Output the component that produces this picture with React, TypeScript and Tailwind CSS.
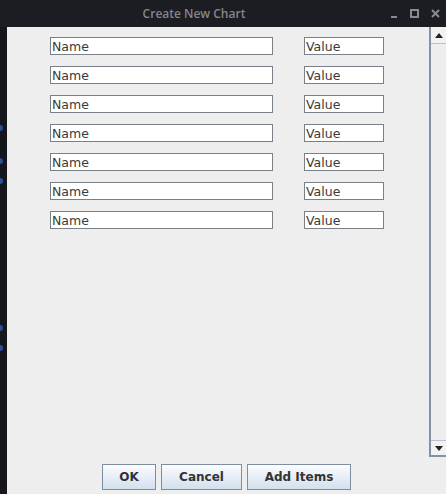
import React from 'react'

const ROWS = 7

function Field({ label, width }: { label: string; width: string }) {
  return (
    <div
      className={`${width} h-[18px] bg-white border border-[#7a8088] flex items-center pl-[1px] pt-[2px] text-[12.5px] leading-none text-[#3a3a3a]`}
      style={{ fontFamily: '"DejaVu Sans", sans-serif' }}
    >
      {label}
    </div>
  )
}

function DialogButton({ label, width }: { label: string; width: string }) {
  return (
    <button
      className={`${width} h-[26px] border border-[#7d8ea3] bg-gradient-to-b from-[#fbfcfe] to-[#d3e0ee] text-[12px] font-bold text-[#333333] flex items-center justify-center`}
      style={{ fontFamily: '"DejaVu Sans", sans-serif' }}
    >
      {label}
    </button>
  )
}

export default function App() {
  return (
    <div className="w-[446px] h-[494px] bg-[#1b1d23] flex flex-col overflow-hidden">
      {/* Title bar */}
      <div className="h-[27px] shrink-0 flex items-center">
        <div
          className="flex-1 text-center text-[12px] font-semibold text-[#85868a] pl-[4px]"
          style={{ fontFamily: '"Open Sans", sans-serif' }}
        >
          Create New Chart
        </div>
        <div className="flex items-center gap-[12px] pr-[6px] w-[62px] justify-end">
          <svg width="8" height="8" viewBox="0 0 8 8">
            <rect x="1" y="6" width="6" height="2" fill="#8a8b8e" />
          </svg>
          <svg width="9" height="9" viewBox="0 0 9 9">
            <rect x="1" y="1" width="7" height="7" fill="none" stroke="#8a8b8e" strokeWidth="2" />
          </svg>
          <svg width="9" height="9" viewBox="0 0 9 9">
            <path d="M1 1 L8 8 M8 1 L1 8" stroke="#8a8b8e" strokeWidth="2" />
          </svg>
        </div>
      </div>

      <div className="flex flex-1">
        {/* Left window edge with desktop glimpses */}
        <div className="w-[7px] shrink-0 bg-[#15171d] flex flex-col">
          <div className="h-[98px]" />
          <div className="h-[6px] w-[3px] rounded-r-full bg-[#2c4f9a]" />
          <div className="h-[27px]" />
          <div className="h-[6px] w-[3px] rounded-r-full bg-[#2c4f9a]" />
          <div className="h-[14px]" />
          <div className="h-[6px] w-[3px] rounded-r-full bg-[#2c4f9a]" />
          <div className="h-[141px]" />
          <div className="h-[6px] w-[3px] rounded-r-full bg-[#2c4f9a]" />
          <div className="h-[14px]" />
          <div className="h-[6px] w-[3px] rounded-r-full bg-[#2c4f9a]" />
        </div>

        {/* Dialog content */}
        <div className="flex-1 bg-[#eeeeee] flex flex-col">
          <div className="h-[430px] flex">
            <div className="flex-1 pt-[10px] pl-[43px] flex flex-col gap-[11px]">
              {Array.from({ length: ROWS }).map((_, i) => (
                <div key={i} className="flex gap-[31px]">
                  <Field label="Name" width="w-[223px]" />
                  <Field label="Value" width="w-[80px]" />
                </div>
              ))}
            </div>

            {/* Scrollbar */}
            <div className="w-[17px] shrink-0 border-l-2 border-[#8393a6] flex flex-col">
              <div className="h-[17px] border-b border-[#b8c2cc] bg-[#f2f2f2] flex items-center justify-center">
                <svg width="8" height="5" viewBox="0 0 8 5">
                  <path d="M0 5 L4 0 L8 5 Z" fill="#222222" />
                </svg>
              </div>
              <div className="flex-1 bg-[#eeeeee]" />
              <div className="h-[17px] border-t border-b-2 border-t-[#b8c2cc] border-b-[#8393a6] bg-[#f2f2f2] flex items-center justify-center">
                <svg width="8" height="5" viewBox="0 0 8 5">
                  <path d="M0 0 L4 5 L8 0 Z" fill="#222222" />
                </svg>
              </div>
            </div>
          </div>

          {/* Buttons */}
          <div className="flex justify-center gap-[5px] pt-[7px]">
            <DialogButton label="OK" width="w-[54px]" />
            <DialogButton label="Cancel" width="w-[81px]" />
            <DialogButton label="Add Items" width="w-[104px]" />
          </div>
        </div>
      </div>
    </div>
  )
}
